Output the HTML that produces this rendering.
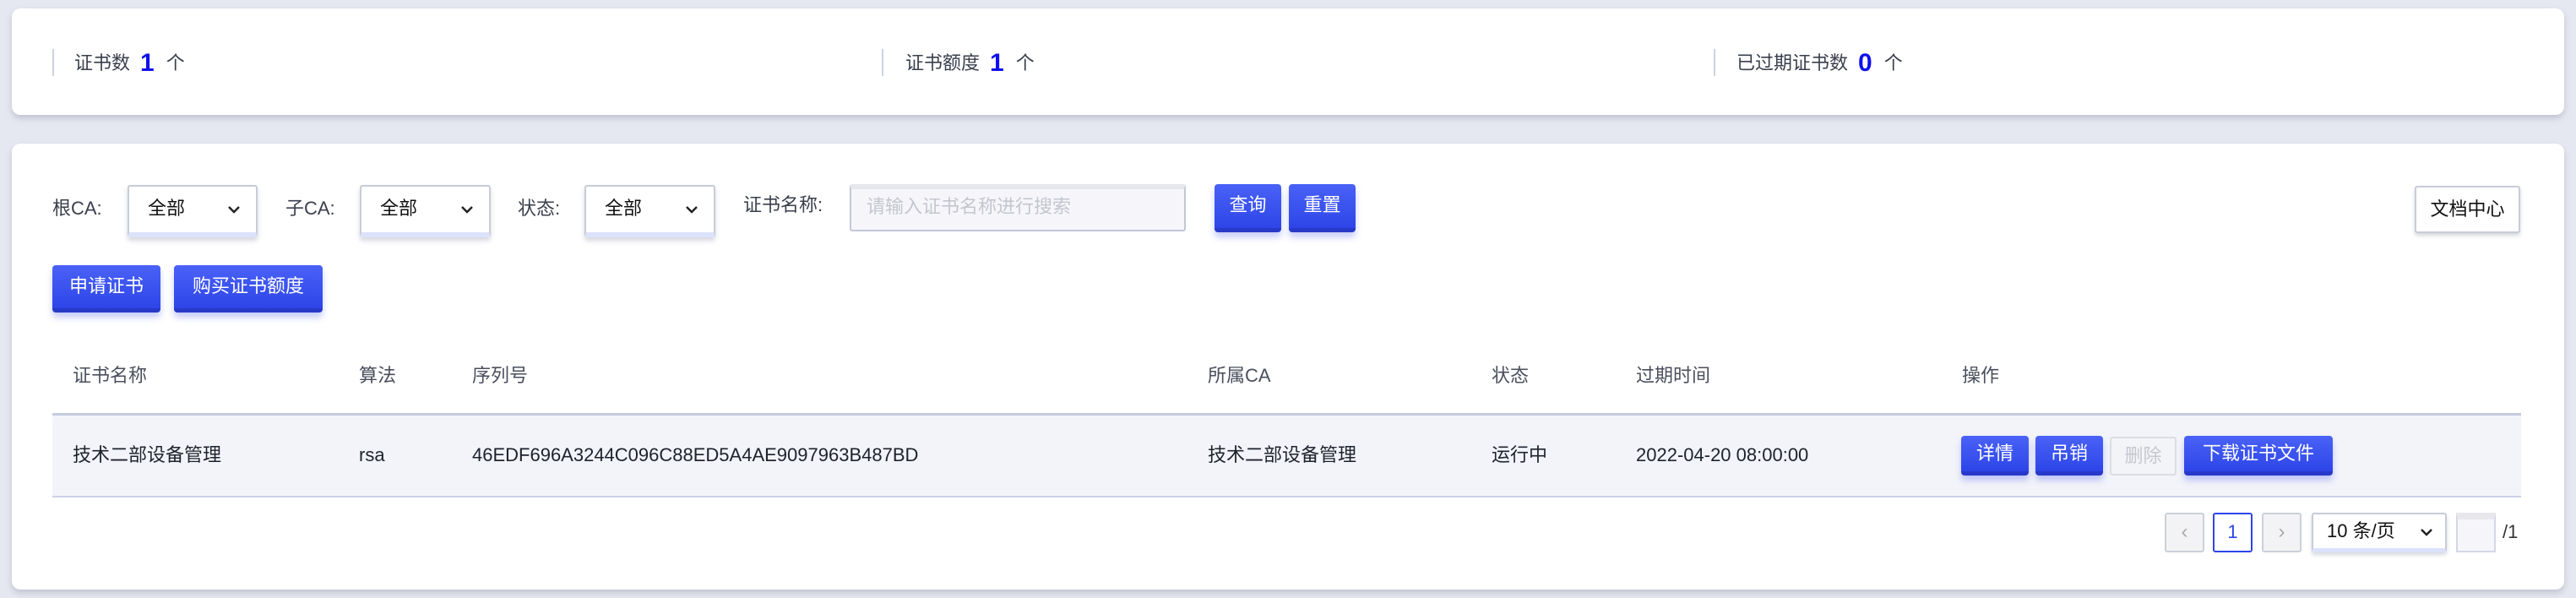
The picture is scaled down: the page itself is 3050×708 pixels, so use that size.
<!DOCTYPE html>
<html><head><meta charset="utf-8"><style>
*{box-sizing:border-box;margin:0;padding:0}
body{width:3050px;height:708px;background:#e6e8f1;font-family:"Liberation Sans","Noto Sans CJK SC",sans-serif;color:#2b2f3a;position:relative;overflow:hidden;font-size:22px}
.a{position:absolute}
.card{position:absolute;background:#fff;border-radius:10px;box-shadow:0 4px 8px rgba(120,125,150,.35)}
.sep{position:absolute;width:2px;background:#ccd1e2}
.lbl{position:absolute;font-size:22px;color:#3a3f4c;line-height:30px;height:30px}
.num{color:#1010ee;font-weight:bold;font-size:30px;margin:0 14px 0 12px;vertical-align:-2px}
.sel{position:absolute;background:#fff;border:2px solid #c8ccd8;border-bottom:6px solid #dde2fb;border-radius:3px;box-shadow:0 4px 6px rgba(120,125,150,.3);font-size:22px;color:#111;padding-left:22px;line-height:52px}
.sel svg{position:absolute;right:18px;top:22px}
.btn{position:absolute;background:linear-gradient(#4a62f6,#2d45e8);border-bottom:5px solid #2839c9;border-radius:4px;color:#fff;font-size:22px;text-align:center;box-shadow:0 6px 8px rgba(70,90,240,.3)}
.th{position:absolute;top:430px;font-size:22px;color:#4a4f5c;line-height:30px;height:30px}
.td{position:absolute;top:524px;font-size:22px;color:#1e222c;line-height:30px;height:30px}
.pg{position:absolute;top:607px;height:47px;border:2px solid #ccd0d8;background:#f3f3f5;border-radius:3px;text-align:center;line-height:42px;color:#aaa;font-size:24px}
</style></head><body>
<div class="card" style="left:14px;top:10px;width:3022px;height:126px"></div>
<div class="sep" style="left:62px;top:58px;height:32px"></div>
<div class="lbl" style="left:88px;top:60px">证书数<span class="num">1</span>个</div>
<div class="sep" style="left:1044px;top:58px;height:32px"></div>
<div class="lbl" style="left:1072px;top:60px">证书额度<span class="num">1</span>个</div>
<div class="sep" style="left:2029px;top:58px;height:32px"></div>
<div class="lbl" style="left:2056px;top:60px">已过期证书数<span class="num">0</span>个</div>

<div class="card" style="left:14px;top:170px;width:3022px;height:528px"></div>
<div class="lbl" style="left:62px;top:232px">根CA:</div>
<div class="sel" style="left:151px;top:219px;width:154px;height:62px">全部<svg width="16" height="10"><path d="M2 2l6 6 6-6" stroke="#222" stroke-width="2.5" fill="none"/></svg></div>
<div class="lbl" style="left:338px;top:232px">子CA:</div>
<div class="sel" style="left:426px;top:219px;width:155px;height:62px">全部<svg width="16" height="10"><path d="M2 2l6 6 6-6" stroke="#222" stroke-width="2.5" fill="none"/></svg></div>
<div class="lbl" style="left:613px;top:232px">状态:</div>
<div class="sel" style="left:692px;top:219px;width:155px;height:62px">全部<svg width="16" height="10"><path d="M2 2l6 6 6-6" stroke="#222" stroke-width="2.5" fill="none"/></svg></div>
<div class="lbl" style="left:880px;top:228px">证书名称:</div>
<div class="a" style="left:1006px;top:218px;width:398px;height:56px;border:2px solid #c3c8d6;border-top:6px solid #e6e7ec;background:#f6f6fa;border-radius:3px;color:#c4c6ce;font-size:22px;padding-left:18px;line-height:42px">请输入证书名称进行搜索</div>
<div class="btn" style="left:1438px;top:218px;width:79px;height:57px;line-height:50px">查询</div>
<div class="btn" style="left:1526px;top:218px;width:79px;height:57px;line-height:50px">重置</div>
<div class="a" style="left:2859px;top:220px;width:125px;height:56px;border:2px solid #c8ccd8;border-radius:3px;background:#fff;box-shadow:0 3px 5px rgba(120,125,150,.3);text-align:center;line-height:52px;font-size:22px;color:#111">文档中心</div>
<div class="btn" style="left:62px;top:314px;width:128px;height:56px;line-height:50px">申请证书</div>
<div class="btn" style="left:206px;top:314px;width:176px;height:56px;line-height:50px">购买证书额度</div>

<div class="th" style="left:86px">证书名称</div>
<div class="th" style="left:425px">算法</div>
<div class="th" style="left:559px">序列号</div>
<div class="th" style="left:1430px">所属CA</div>
<div class="th" style="left:1766px">状态</div>
<div class="th" style="left:1937px">过期时间</div>
<div class="th" style="left:2323px">操作</div>
<div class="a" style="left:62px;top:489px;width:2923px;height:100px;background:#f3f4f9;border-top:3px solid #c6cbdc;border-bottom:2px solid #ccd1e6"></div>
<div class="td" style="left:86px">技术二部设备管理</div>
<div class="td" style="left:425px">rsa</div>
<div class="td" style="left:559px">46EDF696A3244C096C88ED5A4AE9097963B487BD</div>
<div class="td" style="left:1430px">技术二部设备管理</div>
<div class="td" style="left:1766px">运行中</div>
<div class="td" style="left:1937px">2022-04-20 08:00:00</div>
<div class="btn" style="left:2322px;top:516px;width:80px;height:47px;line-height:42px">详情</div>
<div class="btn" style="left:2410px;top:516px;width:80px;height:47px;line-height:42px">吊销</div>
<div class="a" style="left:2498px;top:517px;width:79px;height:46px;border:2px solid #dcdde2;border-radius:3px;background:#f3f4f7;color:#c5c7cf;text-align:center;line-height:42px;font-size:22px">删除</div>
<div class="btn" style="left:2586px;top:516px;width:176px;height:47px;line-height:42px">下载证书文件</div>

<div class="pg" style="left:2563px;width:47px">‹</div>
<div class="pg" style="left:2620px;width:47px;border-color:#2d45e8;background:#fff;color:#2d45e8;font-size:22px">1</div>
<div class="pg" style="left:2678px;width:47px">›</div>
<div class="a" style="left:2737px;top:607px;width:160px;height:47px;border:2px solid #c8ccd8;border-bottom:5px solid #dde2fb;background:#fff;border-radius:3px;box-shadow:0 3px 5px rgba(120,125,150,.3);font-size:22px;color:#111;padding-left:16px;line-height:40px">10 条/页<svg class="a" style="right:14px;top:16px" width="16" height="10"><path d="M2 2l6 6 6-6" stroke="#222" stroke-width="2.5" fill="none"/></svg></div>
<div class="a" style="left:2908px;top:607px;width:47px;height:47px;border:2px solid #d4d7e6;border-top:8px solid #e8e8ec;background:#f6f6fa"></div>
<div class="a" style="left:2963px;top:617px;font-size:22px;color:#333">/1</div>
</body></html>
